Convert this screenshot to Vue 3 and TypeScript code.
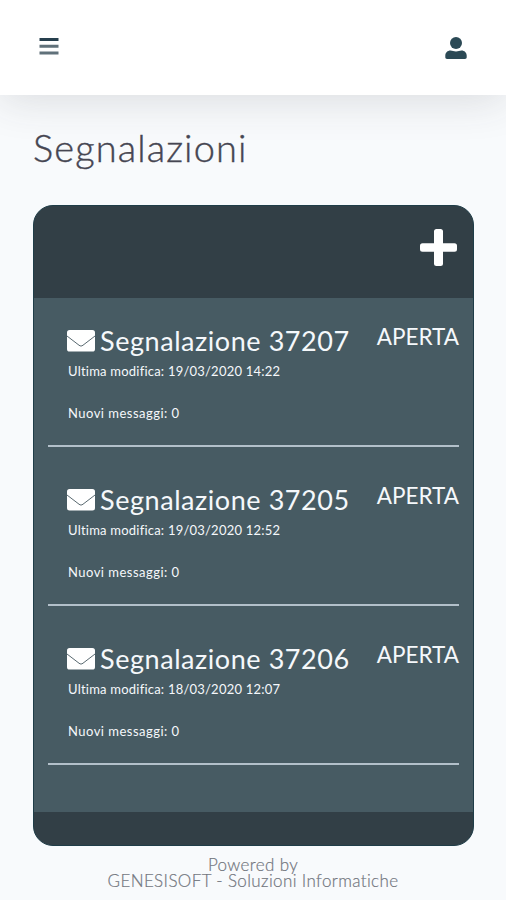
<script setup lang="ts">
interface Report {
  id: number
  updated: string
  unread: number
  status: string
}

const reports: Report[] = [
  { id: 37207, updated: '19/03/2020 14:22', unread: 0, status: 'APERTA' },
  { id: 37205, updated: '19/03/2020 12:52', unread: 0, status: 'APERTA' },
  { id: 37206, updated: '18/03/2020 12:07', unread: 0, status: 'APERTA' },
]
</script>

<template>
  <div class="page">
    <header class="topbar">
      <button class="icon-button" aria-label="Menu">
        <svg class="menu-icon" viewBox="0 0 20 18">
          <path class="bar-top" d="M0.5 1h19v3h-19z" />
          <path class="bar-rest" d="M0.5 7.700h19v3h-19zM0.5 14.400h19v3h-19z" />
        </svg>
      </button>
      <button class="icon-button" aria-label="Profilo">
        <svg class="user-icon" viewBox="0 0 22 22">
          <circle cx="11" cy="6" r="6" />
          <path d="M5.500 13.600c2 0 3 .8 5.500 .8s3.500-.8 5.500-.8c3 0 5.200 2.200 5.200 5v1.700c0 1-.7 1.700-1.700 1.700h-18c-1 0-1.700-.7-1.700-1.700v-1.700c0-2.800 2.200-5 5.200-5z" />
        </svg>
      </button>
    </header>

    <main class="content">
      <h1 class="title"><span>Segnalazioni</span></h1>
      <section class="card">
        <div class="card-header">
          <button class="icon-button" aria-label="Nuova segnalazione">
            <svg class="plus-icon" viewBox="0 0 37 37">
              <path d="M16.500 0h4a2.500 2.500 0 0 1 2.500 2.500v11.700h11.500a2.500 2.500 0 0 1 2.500 2.500v3.600a2.500 2.500 0 0 1-2.500 2.500h-11.500v11.700a2.500 2.500 0 0 1-2.500 2.500h-4a2.500 2.500 0 0 1-2.500-2.500v-11.700h-11.500a2.500 2.500 0 0 1-2.500-2.500v-3.600a2.500 2.500 0 0 1 2.500-2.500h11.500v-11.700a2.500 2.500 0 0 1 2.500-2.500z" />
            </svg>
          </button>
        </div>
        <div class="card-body">
          <article v-for="report in reports" :key="report.id" class="report">
            <div class="details">
              <h2 class="name">
                <svg class="mail-icon" viewBox="0 0 28 22">
                  <rect width="28" height="21.500" rx="2.600" />
                  <path d="M0 6l12 9.200c1.500 1.100 2.500 1.100 4 0L28 6" />
                </svg>
                <span>Segnalazione {{ report.id }}</span>
              </h2>
              <p class="meta updated"><span>Ultima modifica: {{ report.updated }}</span></p>
              <p class="meta unread"><span>Nuovi messaggi: {{ report.unread }}</span></p>
            </div>
            <span class="status">{{ report.status }}</span>
          </article>
        </div>
        <div class="card-footer"></div>
      </section>
    </main>

    <footer class="credits">
      <span class="powered">Powered by</span>
      <span class="company">GENESISOFT - Soluzioni Informatiche</span>
    </footer>
  </div>
</template>

<style>
body {
  margin: 0;
  background: #f8fafc;
}
</style>

<style scoped>
.page {
  box-sizing: border-box;
  height: 900px;
  overflow: hidden;
  background: #f8fafc;
  font-family: Lato, 'Noto Sans', sans-serif;
}

.topbar {
  box-sizing: border-box;
  display: flex;
  justify-content: space-between;
  align-items: flex-start;
  height: 95px;
  padding: 37px 39px 0;
  background: #fff;
  box-shadow: 0 4px 44px rgba(58, 59, 62, 0.16);
}

.icon-button {
  display: block;
  padding: 0;
  border: 0;
  background: none;
}

.icon-button svg {
  display: block;
}

.menu-icon {
  width: 20px;
  height: 18px;
}

.bar-top {
  fill: #263f4d;
}

.bar-rest {
  fill: #60717a;
}

.user-icon {
  width: 22px;
  height: 22px;
  fill: #2b4955;
}

.content {
  padding: 0 32px 0 33px;
}

.title {
  box-sizing: border-box;
  height: 110px;
  margin: 0;
  padding-top: 29px;
  color: #464652;
  font-size: 38px;
  font-weight: 300;
  line-height: 46px;
  letter-spacing: 1.100px;
  -webkit-text-stroke: 0.400px #464652;
}

.card {
  box-sizing: border-box;
  display: flex;
  flex-direction: column;
  height: 641px;
  overflow: hidden;
  border: 1px solid #1f3d48;
  border-radius: 20px;
  background: #323f46;
}

.card-header {
  box-sizing: border-box;
  display: flex;
  align-items: flex-start;
  justify-content: flex-end;
  height: 92px;
  padding: 23px 16px 0;
}

.plus-icon {
  width: 37px;
  height: 37px;
  fill: #fff;
}

.card-body {
  flex: 1;
  padding: 0 14px;
  background: #475b63;
}

.card-footer {
  height: 33px;
}

.report {
  box-sizing: border-box;
  display: flex;
  justify-content: space-between;
  height: 159px;
  border-bottom: 2px solid #b3c0ca;
  color: #f5f8fb;
}

.report:first-child {
  height: 149px;
}

.report:first-child .details {
  padding-top: 26px;
}

.report:first-child .status {
  padding-top: 25px;
}

.details {
  padding: 36px 0 0 19px;
}

.name {
  display: flex;
  align-items: center;
  gap: 5px;
  height: 34px;
  margin: 0;
  font-size: 27px;
  font-weight: 400;
  line-height: 34px;
  letter-spacing: 0.560px;
  white-space: nowrap;
}

.mail-icon {
  width: 28px;
  height: 22px;
}

.mail-icon rect {
  fill: #fff;
}

.mail-icon path {
  fill: none;
  stroke: #596970;
  stroke-width: 1;
}

.meta {
  margin: 0;
  padding-left: 1px;
  font-size: 13px;
  line-height: 16px;
  white-space: nowrap;
}

.updated {
  padding-top: 5px;
  letter-spacing: 0.220px;
}

.unread {
  padding-top: 26px;
  letter-spacing: 0.480px;
}

.status {
  padding-top: 35px;
  font-size: 22.500px;
  line-height: 28px;
}

.credits {
  display: flex;
  flex-direction: column;
  align-items: center;
  padding-top: 11px;
  color: #72767e;
  font-size: 17px;
  font-weight: 300;
  line-height: 16px;
  letter-spacing: 0.370px;
  -webkit-text-stroke: 0.200px #72767e;
}
</style>
